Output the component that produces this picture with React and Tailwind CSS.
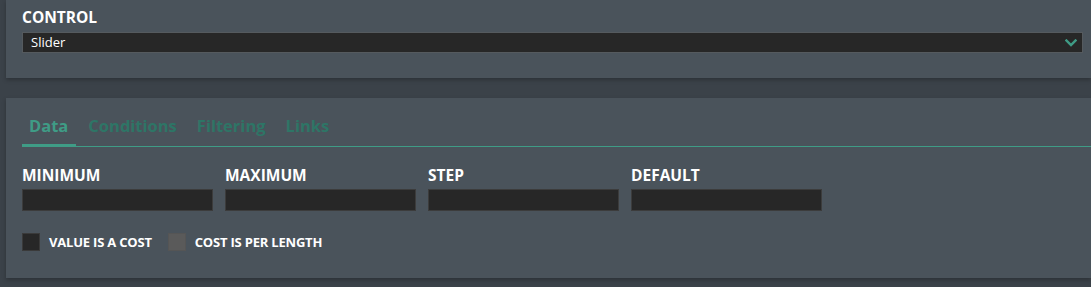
import { useState } from 'react'

const font = { fontFamily: '"Open Sans", "Noto Sans", sans-serif' }

function Chevron() {
  return (
    <svg width="12" height="8" viewBox="0 0 12 8" fill="none" stroke="#3f9c86" strokeWidth="2.4" strokeLinecap="square">
      <polyline points="1.5 1.5 6 6 10.5 1.5" />
    </svg>
  )
}

const tabs = ['Data', 'Conditions', 'Filtering', 'Links']
const fields = ['MINIMUM', 'MAXIMUM', 'STEP', 'DEFAULT']

export default function App() {
  const [tab, setTab] = useState('Data')

  return (
    <div className="min-h-screen bg-[#3b4249] pl-[6px] pb-[9px]" style={font}>
      {/* Control select */}
      <section className="h-[78px] bg-[#4a535b] pl-4 pr-2 pt-[6px] shadow-[0_2px_4px_rgba(0,0,0,0.25)]">
        <div className="text-[15.5px] leading-[22px] font-bold text-white">CONTROL</div>
        <div className="mt-[4px] h-[21px] flex items-center justify-between bg-[#272727] border border-[#555a5e] pl-2 pr-[5px]">
          <span className="text-[13px] leading-none text-white">Slider</span>
          <Chevron />
        </div>
      </section>

      {/* Tabs panel */}
      <section className="mt-5 h-[180px] bg-[#4a535b] pl-4 pt-4 shadow-[0_2px_4px_rgba(0,0,0,0.25)]">
        <div className="flex gap-[5px] border-b border-[#3f9c86]">
          {tabs.map(t => (
            <button
              key={t}
              onClick={() => setTab(t)}
              className={
                'pl-[7px] pr-[8px] pb-[7px] text-[16.5px] leading-[23px] font-bold -mb-px border-b-[3px] ' +
                (tab === t ? 'text-[#3f9c86] border-[#3f9c86]' : 'text-[#2e7566] border-transparent')
              }
            >
              {t}
            </button>
          ))}
        </div>

        <div className="mt-[17px] flex gap-[12px]">
          {fields.map(f => (
            <div key={f} className="w-[191px]">
              <div className="text-[15.5px] leading-[22px] font-bold text-white">{f}</div>
              <input className="mt-[3px] block w-full h-[22px] bg-[#272727] border border-[#3c3c3c] outline-none" />
            </div>
          ))}
        </div>

        <div className="mt-[22px] flex items-center">
          <span className="w-[18px] h-[18px] bg-[#272727] border border-[#3a3a3a]" />
          <span className="ml-[9px] text-[13px] leading-[18px] font-bold tracking-[-0.2px] text-white">VALUE IS A COST</span>
          <span className="ml-4 w-[18px] h-[18px] bg-[#5a5a5a] border border-[#555555]" />
          <span className="ml-[9px] text-[13px] leading-[18px] font-bold tracking-[-0.2px] text-white">COST IS PER LENGTH</span>
        </div>
      </section>
    </div>
  )
}
